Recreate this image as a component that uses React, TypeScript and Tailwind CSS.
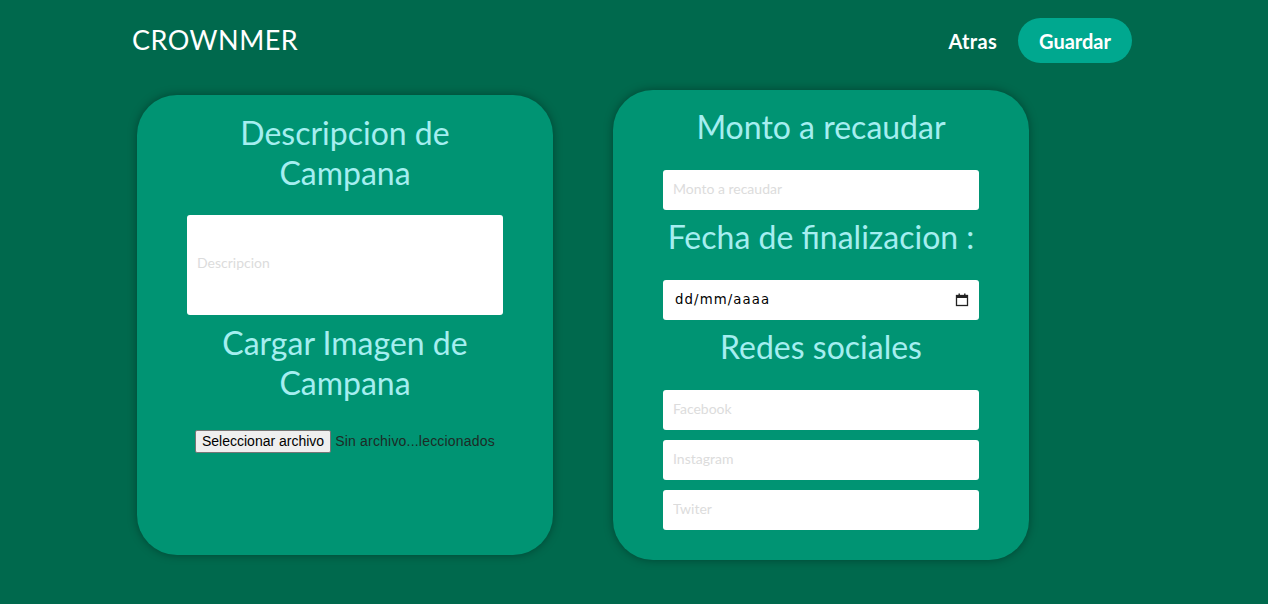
import React from "react";

const font = { fontFamily: "Lato, 'Noto Sans', sans-serif" };

function Field({ placeholder }: { placeholder: string }) {
  return (
    <input
      type="text"
      placeholder={placeholder}
      className="h-10 w-full rounded-[3px] bg-white px-[10px] pb-[4px] text-[14px] text-gray-800 outline-none placeholder:text-[#dcdcdc]"
    />
  );
}

function Title({ children }: { children: React.ReactNode }) {
  return (
    <h2 className="text-center text-[32px] leading-10 text-[#a5eef0]">
      {children}
    </h2>
  );
}

export default function App() {
  return (
    <div className="min-h-[604px] w-full bg-[#00694d]" style={font}>
      <header className="ml-[132px] flex w-[1000px] items-center justify-between pt-[18px]">
        <span className="text-[27px] tracking-[0.5px] text-white">CROWNMER</span>
        <nav className="flex items-center gap-[21px]">
          <button className="text-[20px] font-bold tracking-[0.3px] text-white">Atras</button>
          <button className="h-[45px] w-[114px] rounded-full bg-[#00a88f] text-[20px] font-bold text-white">
            Guardar
          </button>
        </nav>
      </header>

      <main className="ml-[137px] mt-[27px] flex items-center gap-[60px]">
        <section className="flex h-[460px] w-[416px] flex-col items-center rounded-[40px] bg-[#009473] px-[50px] pt-[18px] shadow-[0_0_10px_rgba(0,0,0,0.35)]">
          <Title>Descripcion de Campana</Title>
          <textarea
            placeholder="Descripcion"
            className="mt-[22px] h-[100px] w-full resize-none rounded-[3px] bg-white px-[10px] pt-[37px] text-[14px] outline-none placeholder:text-[#dcdcdc]"
          />
          <div className="mt-2">
            <Title>Cargar Imagen de Campana</Title>
          </div>
          <div
            className="mt-[27px] flex items-center gap-[4px] text-[14px]"
            style={{ fontFamily: "'Liberation Sans', Arial, sans-serif" }}
          >
            <span className="rounded-[2px] border border-[#767676] bg-[#efefef] px-[6px] py-[0px] text-black">
              Seleccionar archivo
            </span>
            <span className="tracking-[0.2px] text-[#1d2b26]">Sin archivo...leccionados</span>
          </div>
        </section>

        <section className="flex h-[470px] w-[416px] flex-col items-center rounded-[40px] bg-[#009473] px-[50px] pt-[17px] shadow-[0_0_10px_rgba(0,0,0,0.35)]">
          <Title>Monto a recaudar</Title>
          <div className="mt-[23px] w-full">
            <Field placeholder="Monto a recaudar" />
          </div>
          <div className="mt-[7px]">
            <Title>Fecha de finalizacion :</Title>
          </div>
          <div className="mt-[23px] flex h-10 w-full items-center justify-between rounded-[3px] bg-white pl-[12px] pr-[10px]">
            <span
              className="text-[13.3px] tracking-[1.1px] text-black"
              style={{ fontFamily: "'DejaVu Sans', sans-serif" }}
            >
              dd/mm/aaaa
            </span>
            <svg width="14" height="14" viewBox="0 0 14 14" fill="none">
              <rect x="1.5" y="2.5" width="11" height="10" stroke="#222" strokeWidth="1.3" />
              <rect x="1.5" y="2.5" width="11" height="2.5" fill="#222" />
              <rect x="3.5" y="0.5" width="1.4" height="2.5" fill="#222" />
              <rect x="9.1" y="0.5" width="1.4" height="2.5" fill="#222" />
            </svg>
          </div>
          <div className="mt-[7px]">
            <Title>Redes sociales</Title>
          </div>
          <div className="mt-[23px] flex w-full flex-col gap-[10px]">
            <Field placeholder="Facebook" />
            <Field placeholder="Instagram" />
            <Field placeholder="Twiter" />
          </div>
        </section>
      </main>
    </div>
  );
}
